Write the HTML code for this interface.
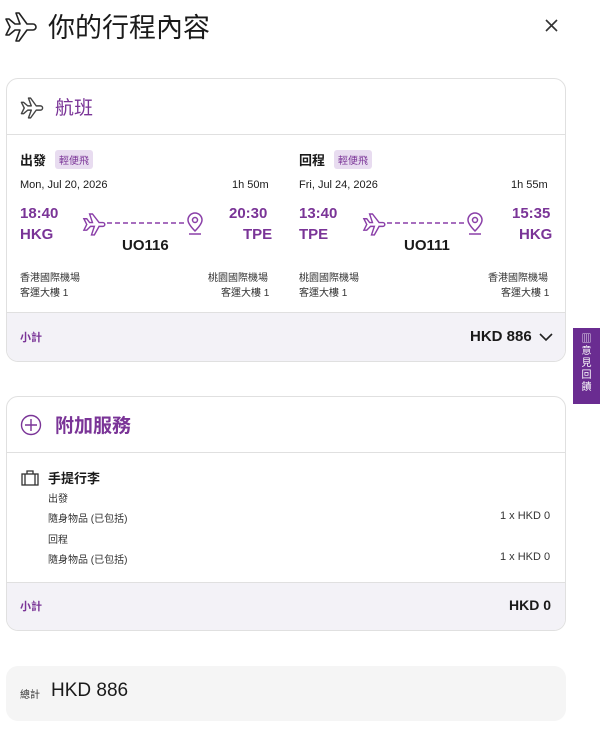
<!DOCTYPE html>
<html><head><meta charset="utf-8"><style>
*{margin:0;padding:0;box-sizing:border-box}
body{width:600px;height:743px;background:#fff;font-family:"Liberation Sans","Noto Sans CJK TC",sans-serif;color:#1a1a1a;position:relative;overflow:hidden}
.a{position:absolute;white-space:nowrap}
.card{position:absolute;left:6px;width:560px;border:1px solid #e0e0e0;border-radius:12px;overflow:hidden;background:#fff}
.p{color:#7a3497}
.b{font-weight:bold}
.tag{background:#e8dcf0;color:#7a3497;font-size:10px;padding:2px 4px;border-radius:3px}
.s{font-size:11px}
.m{font-size:10px;color:#333}
</style></head><body>
<svg class="a" style="left:4px;top:10px" width="34" height="34" viewBox="0 0 34 34" fill="none" stroke="#222" stroke-width="1.6" stroke-linejoin="round"><path d="M2 9l4 8-4 8h3l6-5h5l-4 11h3l8-11h6a3 3 0 000-6h-6L15 3h-3l4 11h-5L5 9z"/></svg>
<div class="a" style="left:48px;top:6px;font-size:27px">你的行程內容</div>
<svg class="a" style="left:545px;top:19px" width="13" height="13" viewBox="0 0 13 13" stroke="#333" stroke-width="1.6"><path d="M1 1l11 11M12 1L1 12"/></svg>

<div class="card" style="top:78px;height:284px">
 <div style="height:56px;border-bottom:1px solid #e0e0e0;position:relative">
  <svg class="a" style="left:13px;top:17px" width="24" height="24" viewBox="0 0 34 34" fill="none" stroke="#444" stroke-width="2" stroke-linejoin="round"><path d="M2 9l4 8-4 8h3l6-5h5l-4 11h3l8-11h6a3 3 0 000-6h-6L15 3h-3l4 11h-5L5 9z"/></svg>
  <div class="a p" style="left:48px;top:14px;font-size:19px">航班</div>
 </div>
 <div style="position:absolute;left:0;top:233px;width:100%;height:51px;background:#f3f2f7;border-top:1px solid #e0e0e0"></div>
 <div class="a p b" style="left:13px;top:250px;font-size:11px">小計</div>
 <div class="a b" style="left:463px;top:249px;font-size:15px">HKD 886</div>
 <svg class="a" style="left:532px;top:254px" width="14" height="9" viewBox="0 0 14 9" fill="none" stroke="#222" stroke-width="1.6"><path d="M1 1l6 6 6-6"/></svg>
</div>

<div class="a b" style="left:20px;top:150px;font-size:13px">出發</div><div class="a tag" style="left:55px;top:150px">輕便飛</div>
<div class="a s" style="left:20px;top:179px">Mon, Jul 20, 2026</div><div class="a s" style="left:232px;top:179px">1h 50m</div>
<div class="a p b" style="left:20px;top:205px;font-size:15px">18:40</div><div class="a p b" style="left:20px;top:226px;font-size:15px">HKG</div>
<div class="a p b" style="left:229px;top:205px;font-size:15px">20:30</div><div class="a p b" style="left:243px;top:226px;font-size:15px">TPE</div>
<div class="a b" style="left:122px;top:237px;font-size:15px">UO116</div>
<svg class="a" style="left:82px;top:212px" width="126" height="26" viewBox="0 0 126 26" fill="none" stroke="#8a3fa8" stroke-width="1.5"><path d="M2 5l3 6-3 6h3l4-4h4l-3 9h3l5-9h4a2 2 0 000-4h-4L11 0H8l3 9H8L5 5z" transform="translate(0,2) scale(.95)"/><path d="M25 11H102" stroke-dasharray="5 3"/><path d="M113 19c-5-5-7-8-7-11a7 7 0 0114 0c0 3-2 6-7 11z"/><circle cx="113" cy="8" r="2.5"/><path d="M107 22h12"/></svg>
<div class="a m" style="left:20px;top:269px">香港國際機場</div><div class="a m" style="left:20px;top:284px">客運大樓 1</div>
<div class="a m" style="left:208px;top:269px">桃園國際機場</div><div class="a m" style="left:221px;top:284px">客運大樓 1</div>

<div class="a b" style="left:299px;top:150px;font-size:13px">回程</div><div class="a tag" style="left:334px;top:150px">輕便飛</div>
<div class="a s" style="left:299px;top:179px">Fri, Jul 24, 2026</div><div class="a s" style="left:511px;top:179px">1h 55m</div>
<div class="a p b" style="left:299px;top:205px;font-size:15px">13:40</div><div class="a p b" style="left:299px;top:226px;font-size:15px">TPE</div>
<div class="a p b" style="left:512px;top:205px;font-size:15px">15:35</div><div class="a p b" style="left:519px;top:226px;font-size:15px">HKG</div>
<div class="a b" style="left:404px;top:237px;font-size:15px">UO111</div>
<svg class="a" style="left:362px;top:212px" width="126" height="26" viewBox="0 0 126 26" fill="none" stroke="#8a3fa8" stroke-width="1.5"><path d="M2 5l3 6-3 6h3l4-4h4l-3 9h3l5-9h4a2 2 0 000-4h-4L11 0H8l3 9H8L5 5z" transform="translate(0,2) scale(.95)"/><path d="M25 11H102" stroke-dasharray="5 3"/><path d="M113 19c-5-5-7-8-7-11a7 7 0 0114 0c0 3-2 6-7 11z"/><circle cx="113" cy="8" r="2.5"/><path d="M107 22h12"/></svg>
<div class="a m" style="left:299px;top:269px">桃園國際機場</div><div class="a m" style="left:299px;top:284px">客運大樓 1</div>
<div class="a m" style="left:488px;top:269px">香港國際機場</div><div class="a m" style="left:501px;top:284px">客運大樓 1</div>

<div class="a" style="left:573px;top:328px;width:27px;height:76px;background:#6a2c91;color:#fff;font-size:10px;text-align:center;padding-top:6px;line-height:12px;white-space:normal">▥<br>意<br>見<br>回<br>饋</div>

<div class="card" style="top:396px;height:235px">
 <div style="height:56px;border-bottom:1px solid #e0e0e0;position:relative">
  <svg class="a" style="left:13px;top:17px" width="22" height="22" viewBox="0 0 22 22" fill="none" stroke="#7a3497" stroke-width="1.4"><circle cx="11" cy="11" r="9.5"/><path d="M11 5v12M5 11h12"/></svg>
  <div class="a p b" style="left:48px;top:14px;font-size:19px">附加服務</div>
 </div>
 <div style="position:absolute;left:0;top:185px;width:100%;height:50px;background:#f3f2f7;border-top:1px solid #e0e0e0"></div>
 <div class="a p b" style="left:13px;top:201px;font-size:11px">小計</div>
 <div class="a b" style="left:502px;top:200px;font-size:14px">HKD 0</div>
</div>
<svg class="a" style="left:21px;top:470px" width="18" height="16" viewBox="0 0 18 16" fill="none" stroke="#333" stroke-width="1.3"><rect x="1" y="4" width="16" height="11"/><path d="M6 4V1h6v3M4 4v11M14 4v11"/></svg>
<div class="a b" style="left:48px;top:468px;font-size:13px">手提行李</div>
<div class="a m" style="left:48px;top:490px">出發</div>
<div class="a m" style="left:48px;top:510px">隨身物品 (已包括)</div><div class="a m" style="left:500px;top:510px;font-size:11px">1 x HKD 0</div>
<div class="a m" style="left:48px;top:531px">回程</div>
<div class="a m" style="left:48px;top:551px">隨身物品 (已包括)</div><div class="a m" style="left:500px;top:551px;font-size:11px">1 x HKD 0</div>

<div class="a" style="left:6px;top:666px;width:560px;height:55px;background:#f5f5f5;border-radius:12px"></div>
<div class="a" style="left:20px;top:686px;font-size:10px;color:#333">總計</div>
<div class="a" style="left:51px;top:680px;font-size:19px">HKD 886</div>
</body></html>
